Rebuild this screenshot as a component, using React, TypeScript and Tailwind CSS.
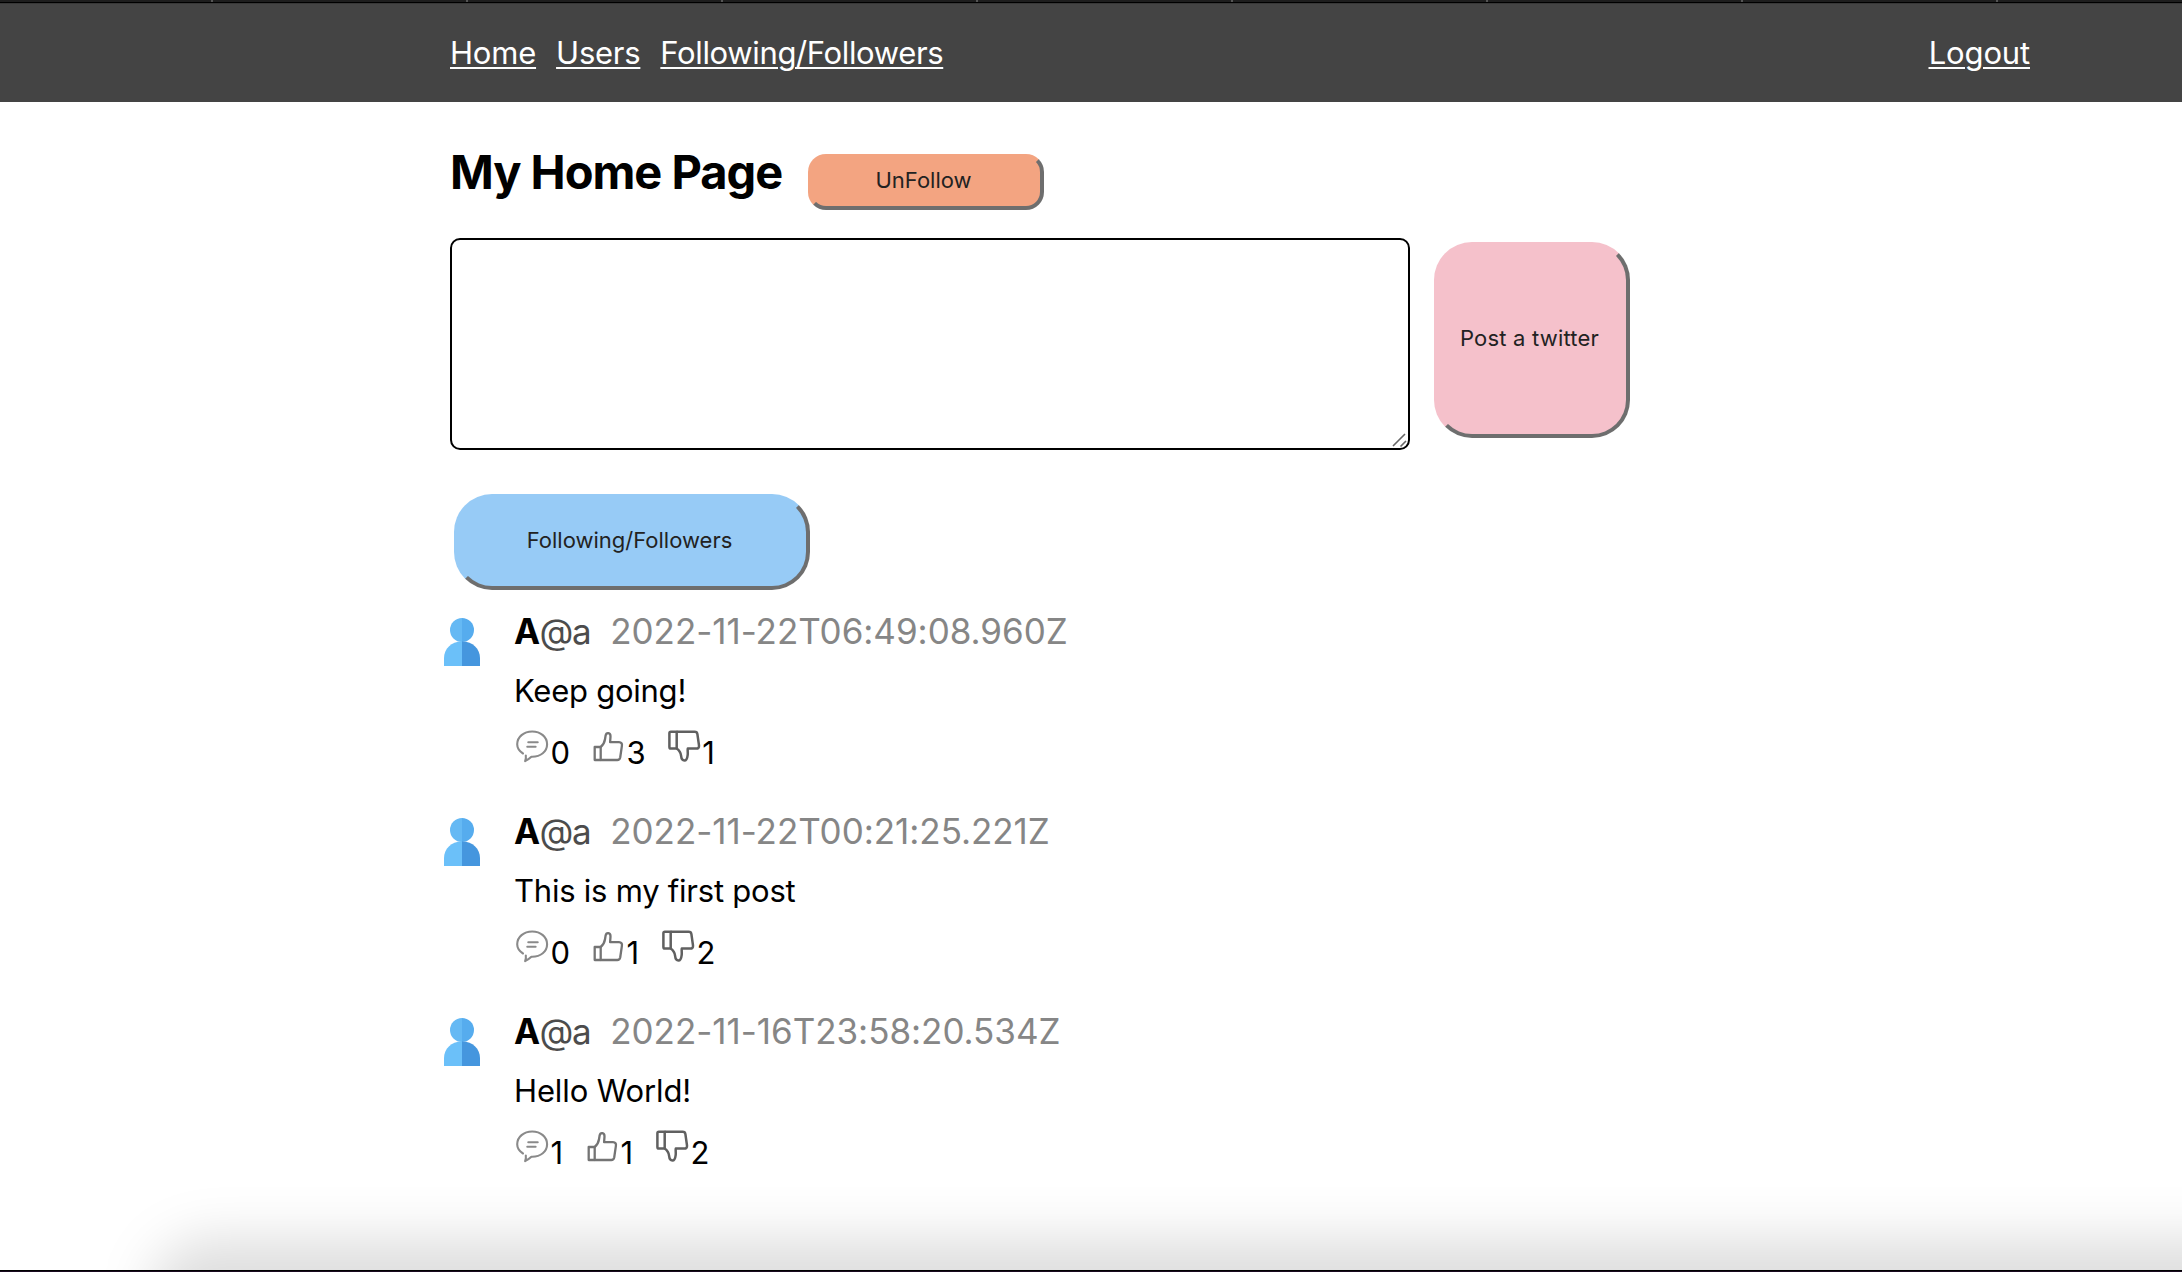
import React from "react";

const tabs = [0, 1, 2, 3, 4, 5, 6, 7];
const posts = [
  { date: "2022-11-22T06:49:08.960Z", text: "Keep going!", comments: 0, likes: 3, dislikes: 1, tracking: "tracking-[-0.25px]" },
  { date: "2022-11-22T00:21:25.221Z", text: "This is my first post", comments: 0, likes: 1, dislikes: 2, tracking: "tracking-[-0.23px]" },
  { date: "2022-11-16T23:58:20.534Z", text: "Hello World!", comments: 1, likes: 1, dislikes: 2, tracking: "tracking-[-0.12px]" },
];

const raised =
  "border-4 border-transparent border-r-[#6e6e6e] border-b-[#6e6e6e] pr-[5px] pb-[3px] text-[22px] text-[#222]";

function Avatar() {
  return (
    <svg className="mt-[9px] h-12 w-9 shrink-0" viewBox="0 0 36 48">
      <path d="M18 0a12 12 0 0 0 0 24z" fill="#65b9f4" />
      <path d="M18 0a12 12 0 0 1 0 24z" fill="#56acee" />
      <path d="M18 23.5C7 23.5 0 31 0 40v8h18z" fill="#6bc0f9" />
      <path d="M18 23.5C29 23.5 36 31 36 40v8H18z" fill="#4596de" />
    </svg>
  );
}

function CommentIcon() {
  return (
    <svg className="h-9 w-9" viewBox="0 0 36 36" fill="none" stroke="#8a8a8a" strokeWidth="2.1" strokeLinecap="round" strokeLinejoin="round">
      <path d="M9 26.500C5.500 24.300 3.200 21.200 3.200 17.300 3.200 10 9.800 4.500 18.200 4.500S33.100 10 33.100 17.300 26.600 29.700 18.200 29.700h-.8c-2 1.900-4 3.200-6.300 4.400 .9-1.800 1-3.600.7-5.600" />
      <path d="M14.300 15.200h9.400M13.300 19.700h8.300" />
    </svg>
  );
}

function ThumbUp() {
  return (
    <svg className="h-9 w-9" viewBox="0 0 36 36" fill="none" stroke="#747474" strokeWidth="2.300" strokeLinejoin="round">
      <path d="M4.700 20h6v13h-6z" />
      <path d="M10.700 20c3-2.200 3.800-4.600 4.300-7.700l.6-3.700c.4-2 1.500-2.600 2.800-2.400 1.700.3 2.200 1.700 2.100 3.400l-.4 5.600h8.900c2.400 0 3.300 1.600 2.900 3.600l-1.700 11.700c-.4 1.800-1.200 2.500-2.900 2.500H10.700" />
    </svg>
  );
}

function ThumbDown() {
  return (
    <svg className="h-9 w-9" viewBox="0 0 36 36" fill="none" stroke="#606060" strokeWidth="2.500" strokeLinejoin="round">
      <path d="M10.700 4.700H4.900c-1 0-1.500.6-1.500 1.500v13.700c0 1 .5 1.600 1.500 1.600h5.800z" />
      <path d="M10.700 4.700h17.900c1.700 0 2.600.8 2.800 2.400l1.600 11.300c.2 2.200-.8 3.200-2.800 3.200h-8.400c-.4 2 .2 3.700-.1 6.200-.4 3.600-1.500 5.700-3.300 5.700s-3-1.500-3.300-4.600c-.3-3.500-1.600-5.400-4.400-7.400" />
    </svg>
  );
}

function Stat({ icon, value }: { icon: React.ReactNode; value: number }) {
  return (
    <span className="flex">
      {icon}
      <span className="min-w-[14px] pt-px pl-[0.5px]">{value}</span>
    </span>
  );
}

export default function App() {
  return (
    <div className="relative h-[1272px] w-[2182px] overflow-hidden bg-white font-['Inter',sans-serif] text-black">
      <div className="flex h-[3px] border-b border-black bg-[#1e1e1e] pl-[211px]">
        {tabs.map((t) => (
          <div key={t} className="h-[2px] w-[255px] shrink-0 border-l-2 border-[#555]" />
        ))}
      </div>
      <header className="flex h-[99px] items-center justify-between border-t border-[#383838] bg-[#444] pr-[152px] pl-[450px] text-[31px] text-white underline decoration-2 underline-offset-[3px]">
        <nav className="flex gap-5">
          <a href="#" className="tracking-[-0.2px]">Home</a>
          <a href="#" className="tracking-[-0.25px]">Users</a>
          <a href="#" className="tracking-[-0.36px]">Following/Followers</a>
        </nav>
        <a href="#" className="tracking-[-0.15px]">Logout</a>
      </header>
      <main className="pl-[450px]">
        <div className="flex h-[136px] items-start pt-[38px]">
          <h1 className="mt-[2px] w-[332px] text-[47px] leading-[60px] font-bold tracking-[-1.03px] whitespace-nowrap">My Home Page</h1>
          <button className={`mt-[14px] ml-[26px] h-14 w-[236px] rounded-[18px] bg-[#f3a481] ${raised}`}>UnFollow</button>
        </div>
        <div className="flex items-start gap-6">
          <div className="relative h-[212px] w-[960px]">
            <textarea className="block h-full w-full resize-none rounded-[10px] border-2 border-black" />
            <svg className="absolute right-[3px] bottom-[3px] h-[15px] w-[15px]" viewBox="0 0 15 15" stroke="#666" strokeWidth="1.6">
              <path d="M1 14L13 2M8.500 14.500L14 9" />
            </svg>
          </div>
          <button className={`mt-1 h-[196px] w-[196px] rounded-[38px] bg-[#f5c1cb] tracking-[0.2px] ${raised}`}>Post a twitter</button>
        </div>
        <button className={`mt-11 ml-1 block h-24 w-[356px] rounded-[38px] bg-[#97cbf6] ${raised}`}>Following/Followers</button>
        <section className="mt-[19px] -ml-1.5">
          {posts.map((p) => (
            <article key={p.date} className="flex h-[200px] gap-[34px]">
              <Avatar />
              <div>
                <p className="flex h-11 text-[35px] leading-[44px]">
                  <b className="tracking-[-0.6px]">A</b>
                  <span className="tracking-[-1.4px] text-[#4c4c4c]">@a</span>
                  <span className="ml-5 tracking-[-0.03px] text-[#868686]">{p.date}</span>
                </p>
                <p className={`mt-[18px] h-10 text-[31px] leading-10 ${p.tracking}`}>{p.text}</p>
                <div className="mt-[16px] flex h-[45px] gap-5 text-[31px] leading-[50px]">
                  <Stat icon={<CommentIcon />} value={p.comments} />
                  <Stat icon={<ThumbUp />} value={p.likes} />
                  <Stat icon={<ThumbDown />} value={p.dislikes} />
                </div>
              </div>
            </article>
          ))}
        </section>
      </main>
      <div className="pointer-events-none absolute top-[1238px] left-[150px] h-[200px] w-[2300px] rounded-[60px] bg-black/13 blur-[26px]" />
      <div className="absolute bottom-0 left-0 h-[2px] w-full border-t border-black bg-[#1a0a20]" />
    </div>
  );
}
